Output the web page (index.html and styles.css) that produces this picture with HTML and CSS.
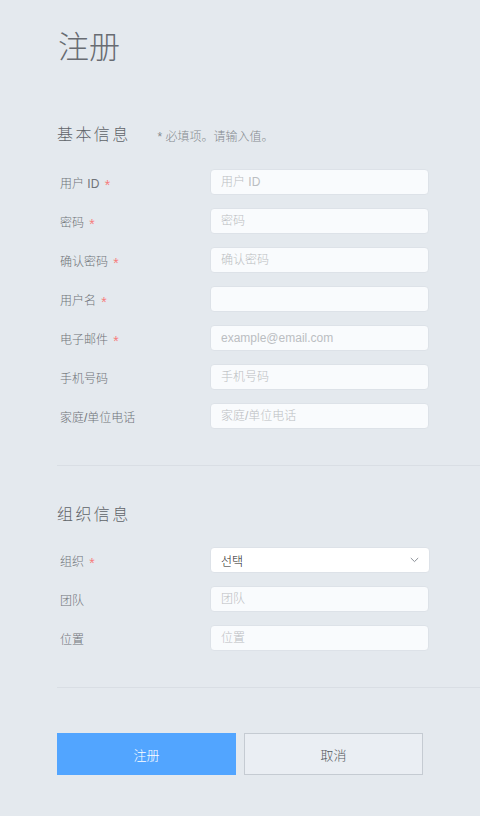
FILE: index.html
```html
<!DOCTYPE html>
<html lang="zh">
<head>
<meta charset="utf-8">
<title>注册</title>
<link rel="stylesheet" href="styles.css">
</head>
<body>
<div class="page">
  <h1 class="title">注册</h1>

  <div class="section-head">
    <h2 class="section-title">基本信息</h2>
    <span class="hint">* 必填项。请输入值。</span>
  </div>
  <div class="rows">
    <div class="row"><label class="label">用户 ID <span class="req">*</span></label><input class="field" placeholder="用户 ID"></div>
    <div class="row"><label class="label">密码 <span class="req">*</span></label><input class="field" type="password" placeholder="密码"></div>
    <div class="row"><label class="label">确认密码 <span class="req">*</span></label><input class="field" type="password" placeholder="确认密码"></div>
    <div class="row"><label class="label">用户名 <span class="req">*</span></label><input class="field"></div>
    <div class="row"><label class="label">电子邮件 <span class="req">*</span></label><input class="field" placeholder="example@email.com"></div>
    <div class="row"><label class="label">手机号码</label><input class="field" placeholder="手机号码"></div>
    <div class="row"><label class="label">家庭/单位电话</label><input class="field" placeholder="家庭/单位电话"></div>
  </div>

  <hr class="divider">

  <div class="section-head second">
    <h2 class="section-title">组织信息</h2>
  </div>
  <div class="rows">
    <div class="row"><label class="label">组织 <span class="req">*</span></label>
      <div class="select"><span class="select-text">선택</span>
        <svg class="chev" width="9" height="6" viewBox="0 0 9 6"><path d="M0.8 1 L4.5 4.6 L8.2 1" fill="none" stroke="#8a8f96" stroke-width="1"/></svg>
      </div>
    </div>
    <div class="row"><label class="label">团队</label><input class="field" placeholder="团队"></div>
    <div class="row"><label class="label">位置</label><input class="field" placeholder="位置"></div>
  </div>

  <hr class="divider">

  <div class="actions">
    <button class="btn primary">注册</button>
    <button class="btn secondary">取消</button>
  </div>
</div>
</body>
</html>
```

FILE: styles.css
```css
html, body {
  margin: 0;
  padding: 0;
  background: #e4e9ee;
}
body {
  font-family: "Liberation Sans", Arial, "Noto Sans CJK SC", "Noto Sans CJK KR", sans-serif;
  color: #666;
  width: 480px;
  height: 816px;
  overflow: hidden;
}
.page {
  padding: 28px 0 0 57px;
}
.title {
  margin: 0;
  font-size: 31px;
  line-height: 40px;
  font-weight: 300;
  color: #686c72;
  padding-left: 1px;
}
.section-head {
  display: flex;
  align-items: center;
  margin-top: 57px;
  height: 20px;
}
.section-head.second {
  margin-top: 39px;
}
.section-title {
  margin: 0;
  font-size: 16px;
  line-height: 20px;
  font-weight: 300;
  letter-spacing: 2.4px;
  color: #5f6368;
}
.hint {
  margin-left: 27px;
  font-size: 12px;
  font-weight: 300;
  color: #85898f;
}
.rows {
  display: flex;
  flex-direction: column;
  gap: 13px;
  margin-top: 24px;
}
.section-head.second + .rows {
  margin-top: 22px;
}
.row {
  display: flex;
  align-items: center;
  height: 26px;
}
.label {
  width: 150px;
  padding-left: 3px;
  font-size: 12px;
  font-weight: 300;
  color: #707479;
}
.req {
  color: #f77c7c;
  margin-left: 2px;
  font-size: 14px;
  line-height: 12px;
  position: relative;
  top: 2px;
}
.field {
  box-sizing: border-box;
  width: 219px;
  height: 26px;
  border: 1px solid #dde2e8;
  border-radius: 4px;
  background: #f9fbfd;
  padding: 0 10px;
  font-family: inherit;
  font-size: 12px;
  font-weight: 300;
  color: #333;
  outline: none;
}
.field::placeholder {
  color: #bbbec2;
}
.select {
  box-sizing: border-box;
  width: 220px;
  height: 26px;
  border: 1px solid #dde2e8;
  border-radius: 4px;
  background: #fff;
  padding: 0 10px;
  display: flex;
  align-items: center;
  justify-content: space-between;
}
.select-text {
  font-size: 12px;
  font-weight: 300;
  color: #222;
  font-family: "Noto Sans CJK KR", sans-serif;
}
.divider {
  margin: 36px 0 0 0;
  border: 0;
  border-top: 1px solid #d9dee4;
  height: 0;
}
.actions {
  display: flex;
  gap: 8px;
  margin-top: 45px;
}
.btn {
  box-sizing: border-box;
  width: 179px;
  height: 42px;
  font-family: inherit;
  font-size: 13px;
  font-weight: 300;
  cursor: pointer;
}
.btn.primary {
  background: #52a5ff;
  border: none;
  color: #fff;
}
.btn.secondary {
  background: #eaeef3;
  border: 1px solid #c5cbd2;
  color: #555a60;
}
```
